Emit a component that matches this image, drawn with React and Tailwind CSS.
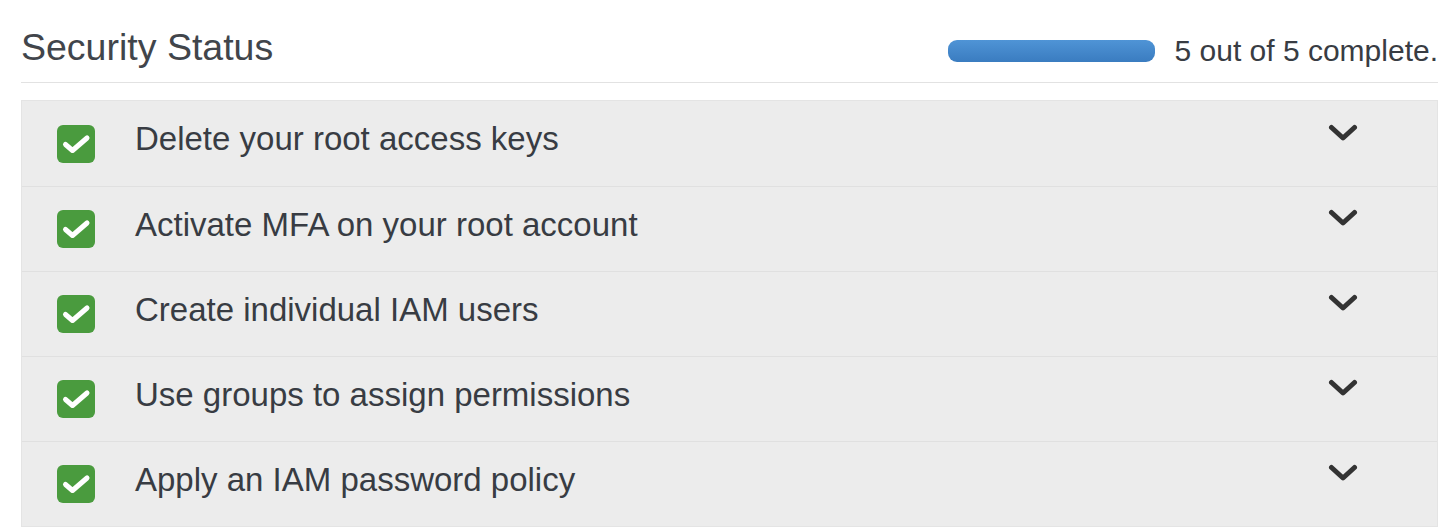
import React from "react";

const items = [
  "Delete your root access keys",
  "Activate MFA on your root account",
  "Create individual IAM users",
  "Use groups to assign permissions",
  "Apply an IAM password policy",
];

function Check() {
  return (
    <div className="w-[38px] h-[38px] rounded-[6px] bg-[#4a9b3e] shrink-0">
      <svg width="38" height="38" viewBox="0 0 38 38">
        <path d="M8.5 19.5 L15.5 25.5 L30 13" fill="none" stroke="#fff" strokeWidth="5" strokeLinecap="round" strokeLinejoin="round" />
      </svg>
    </div>
  );
}

function Chevron() {
  return (
    <svg width="30" height="18" viewBox="0 0 30 18" className="shrink-0">
      <path d="M3.5 3.5 L15 14 L26.5 3.5" fill="none" stroke="#333" strokeWidth="5" strokeLinecap="round" strokeLinejoin="round" />
    </svg>
  );
}

export default function App() {
  return (
    <div className="w-[1448px] h-[528px] bg-white pl-[21px] pr-[10px] overflow-hidden" style={{ fontFamily: '"Liberation Sans", Arial, sans-serif' }}>
      <div className="flex justify-between border-b border-[#e2e2e2] h-[83px]">
        <div className="mt-[25px] text-[37.5px] leading-[44px] text-[#41454b]">Security Status</div>
        <div className="flex items-center mt-[39px] h-[24px] self-start">
          <div className="w-[207px] h-[22px] rounded-[9px] bg-gradient-to-b from-[#4f94d6] to-[#3a7cc0]" />
          <div className="ml-[20px] text-[30px] leading-[24px] text-[#383c43]">5 out of 5 complete.</div>
        </div>
      </div>
      <div className="mt-[17px] bg-[#ececec] border border-[#e4e4e4]">
        {items.map((t, i) => (
          <div key={t} className={"flex items-center h-[85px] pl-[35px] pr-[79px] " + (i > 0 ? "border-t border-[#e0e0e0]" : "")}>
            <Check />
            <div className="ml-[40px] text-[33px] text-[#383c43] leading-[40px] mt-[-9px] flex-1">{t}</div>
            <div className="mb-[22px]"><Chevron /></div>
          </div>
        ))}
      </div>
    </div>
  );
}
